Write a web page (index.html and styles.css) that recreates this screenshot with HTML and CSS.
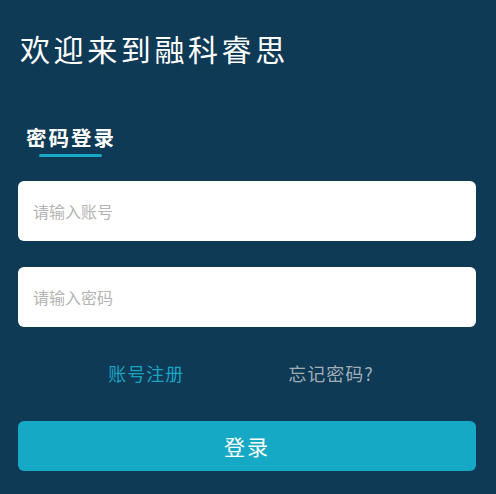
FILE: index.html
```html
<!DOCTYPE html>
<html lang="zh">
<head>
<meta charset="utf-8">
<link rel="stylesheet" href="styles.css">
</head>
<body>
<div class="page">
  <h1 class="title">欢迎来到融科睿思</h1>
  <div class="tabs">
    <div class="tab active">密码登录</div>
  </div>
  <form class="form">
    <input class="field" type="text" placeholder="请输入账号">
    <input class="field" type="password" placeholder="请输入密码">
    <div class="links">
      <a class="link register">账号注册</a>
      <a class="link forgot">忘记密码?</a>
    </div>
    <button class="submit" type="button">登录</button>
  </form>
</div>
</body>
</html>
```

FILE: styles.css
```css
* { box-sizing: border-box; }
html, body {
  margin: 0;
  padding: 0;
  background: #0e3a56;
  font-family: "Noto Sans CJK SC", "Noto Sans", sans-serif;
}
.page {
  padding: 28px 20px 0 18px;
  height: 494px;
  overflow: hidden;
}
.title {
  margin: 0 0 0 2px;
  font-size: 30px;
  line-height: 40px;
  font-weight: 400;
  letter-spacing: 3.6px;
  color: #ffffff;
}
.tabs {
  display: flex;
  margin-top: 55px;
  padding-left: 8px;
}
.tab {
  position: relative;
  font-size: 20.5px;
  line-height: 28px;
  font-weight: 700;
  letter-spacing: 2px;
  color: #ffffff;
  padding-bottom: 10px;
}
.tab.active::after {
  content: "";
  position: absolute;
  left: 13px;
  bottom: 4px;
  width: 63px;
  height: 3px;
  border-radius: 2px;
  background: #17a9c6;
}
.form {
  display: flex;
  flex-direction: column;
  margin-top: 20px;
}
.field {
  height: 60px;
  border: none;
  border-radius: 6px;
  background: #ffffff;
  padding: 0 15px;
  font-family: inherit;
  font-size: 16px;
  color: #333;
  outline: none;
}
.field + .field { margin-top: 26px; }
.field::placeholder { color: #b4b4b4; }
.links {
  display: flex;
  justify-content: center;
  gap: 104px;
  padding-right: 12px;
  margin-top: 33px;
  height: 26px;
  align-items: center;
}
.link {
  font-size: 18px;
  letter-spacing: 1px;
  cursor: pointer;
}
.register { color: #1aa3c2; }
.forgot { color: #a1adb5; }
.submit {
  margin-top: 35px;
  height: 50px;
  border: none;
  border-radius: 6px;
  background: #15a9c6;
  color: #ffffff;
  font-family: inherit;
  font-size: 21px;
  letter-spacing: 2px;
}
```
